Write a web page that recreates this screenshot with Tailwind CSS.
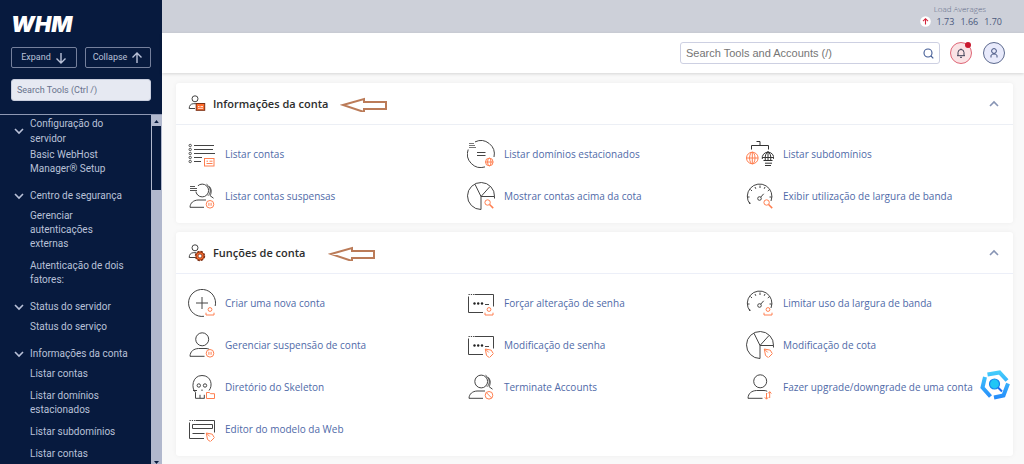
<!DOCTYPE html>
<html lang="pt-BR">
<head>
<meta charset="utf-8">
<title>WHM</title>
<script src="https://cdn.jsdelivr.net/npm/@tailwindcss/browser@4"></script>
</head>
<body class="flex h-screen overflow-hidden bg-[#f9f9f9] font-['Open_Sans',sans-serif]">

<!-- Shared icon shapes -->
<svg class="hidden" aria-hidden="true">
  <defs>
    <g id="b-user" stroke="#ff7f50" fill="none"><circle cx="22" cy="20.5" r="1.9"/><path d="M18 23.7v2.3h8v-2.3"/></g>
    <g id="b-pause" stroke="#ff7f50" fill="none"><circle cx="22" cy="22.3" r="3.8"/><path d="M20.9 20.8v3M23.1 20.8v3"/></g>
    <g id="b-find" stroke="#ff7f50" fill="none"><circle cx="20.6" cy="20.5" r="2.7"/><path d="M22.6 22.5l3.6 3.6" stroke-width="1.5"/></g>
    <g id="b-pen" stroke="#ff7f50" fill="none"><path d="M19.500 24.500l-1.200-6.500 6 1.200 1.700 3M19.500 24.500l2.500 1.800M18.300 18l3.500 3.500M26.500 22.500l-4 4"/></g>
    <g id="user" stroke="#444" fill="none"><circle cx="14.2" cy="8.3" r="6.5"/><path d="M16.5 25.3H2c.2-5 3.600-7.500 8.500-7.800h7.500c1.300 0 2.400.3 3.200.8"/></g>
    <g id="users" stroke="#444" fill="none"><circle cx="14.2" cy="8.500" r="6.400"/><path d="M18.500 2.200c4.800 3.500 4.800 8.800 1.500 11.500M21.500 4.500c2.300 3 2 6.500.6 9.200l3.400 2.500M16 25.300H2c.2-4.500 3.500-7 8-7.300h8"/></g>
    <g id="pie" stroke="#444" fill="none"><path d="M14 27.500A13.500 13.500 0 1 1 27.500 14.500H14zM14 14.500L8 2.300M14 14.500l9-10M27.500 14.500v2"/></g>
    <g id="gauge" stroke="#444" fill="none"><path d="M4 22A12.300 12.300 0 1 1 25 19"/><path d="M1.500 15h2M4.500 7.500l1.500 1.500M14 3.500v2.500M23.500 7.500l-1.700 1.500M26 15h-2.500M9 5l.8 1.800M19 5l-.8 1.800M4 22l-.5-2"/><circle cx="13.500" cy="16.500" r="1.800"/><path d="M14.700 15.200l3-3.400"/></g>
    <g id="pass" stroke="#444" fill="none"><path d="M1.500 7.500v16h14.500M7.500 5.500h19v12"/><path d="M1.500 5.500h5.500" stroke-dasharray="1.300 1"/><path d="M18 15.500h4"/><g fill="#222" stroke="none"><circle cx="7.500" cy="14.500" r="1.200"/><circle cx="11.200" cy="14.500" r="1.200"/><circle cx="15" cy="14.500" r="1.200"/></g></g>
    <g id="globe" fill="none"><circle r="5.800"/><ellipse rx="2.700" ry="5.800"/><path d="M-5.800 0H5.800M0-5.800V5.800"/></g>
    <g id="person-sm" stroke="#444" fill="none"><circle cx="7" cy="3.800" r="3"/><path d="M7 13.500H1.200c0-3 1.500-4.500 4-4.800H8.500"/></g>
  </defs>
</svg>

<aside class="flex w-[162px] shrink-0 flex-col bg-[#071a3e] font-[Roboto,sans-serif] text-[#b9c1d8]">
  <div class="flex flex-col border-b border-[#8e98b3] px-[11px] py-[13px]">
    <div class="h-[22px] font-[Inter,sans-serif] text-[22px] leading-[22px] font-black text-white italic">WHM</div>
    <div class="mt-3 flex gap-2">
      <button type="button" class="flex h-[21px] flex-1 items-center justify-center gap-1 rounded-[2px] border border-[#75809c] text-[9px]">Expand
        <svg class="size-3" viewBox="0 0 12 12" fill="none" stroke="currentColor" stroke-width="1.400"><path d="M6 1v9.500M1.500 6.500L6 11l4.500-4.500"/></svg>
      </button>
      <button type="button" class="flex h-[21px] flex-1 items-center justify-center gap-1 rounded-[2px] border border-[#75809c] text-[9px]">Collapse
        <svg class="size-3" viewBox="0 0 12 12" fill="none" stroke="currentColor" stroke-width="1.400"><path d="M6 11V1.500M1.500 5.500L6 1l4.500 4.500"/></svg>
      </button>
    </div>
    <input type="text" aria-label="Search Tools" placeholder="Search Tools (Ctrl /)" class="mt-[11px] h-[22px] w-full rounded-[3px] border border-[#c9cede] bg-[#e6e9f2] px-[5px] text-[9px] placeholder:text-[#68728c]">
  </div>

  <div class="flex min-h-0 flex-1">
    <nav class="min-w-0 flex-1 overflow-hidden pt-px text-[10px] leading-[14px]">
      <button type="button" class="flex w-full items-center gap-[6px] pl-[14px] text-left leading-[15px]">
        <svg class="h-[10px] w-[10px] shrink-0" viewBox="0 0 10 10" fill="none" stroke="currentColor" stroke-width="1.600"><path d="M1 3l4 4 4-4"/></svg><span>Configuração do<br>servidor</span></button>
      <a href="#" class="block pt-0.5 pb-1 pl-[30px]">Basic WebHost<br>Manager® Setup</a>

      <button type="button" class="flex w-full items-center gap-[6px] pt-2 pb-0.5 pl-[14px] text-left leading-[15px]">
        <svg class="h-[10px] w-[10px] shrink-0" viewBox="0 0 10 10" fill="none" stroke="currentColor" stroke-width="1.600"><path d="M1 3l4 4 4-4"/></svg><span>Centro de segurança</span></button>
      <a href="#" class="block py-1 pl-[30px]">Gerenciar<br>autenticações<br>externas</a>
      <a href="#" class="block py-1 pl-[30px]">Autenticação de dois<br>fatores:</a>

      <button type="button" class="flex w-full items-center gap-[6px] pt-2 pb-0.5 pl-[14px] text-left leading-[15px]">
        <svg class="h-[10px] w-[10px] shrink-0" viewBox="0 0 10 10" fill="none" stroke="currentColor" stroke-width="1.600"><path d="M1 3l4 4 4-4"/></svg><span>Status do servidor</span></button>
      <a href="#" class="block py-1 pl-[30px]">Status do serviço</a>

      <button type="button" class="flex w-full items-center gap-[6px] pt-2 pb-0.5 pl-[14px] text-left leading-[15px]">
        <svg class="h-[10px] w-[10px] shrink-0" viewBox="0 0 10 10" fill="none" stroke="currentColor" stroke-width="1.600"><path d="M1 3l4 4 4-4"/></svg><span>Informações da conta</span></button>
      <a href="#" class="block py-1 pl-[30px]">Listar contas</a>
      <a href="#" class="block py-1 pl-[30px]">Listar domínios<br>estacionados</a>
      <a href="#" class="block py-1 pl-[30px]">Listar subdomínios</a>
      <a href="#" class="block py-1 pl-[30px]">Listar contas</a>
    </nav>
    <!-- Scrollbar -->
    <div class="flex w-[11px] flex-col justify-between overflow-hidden bg-[#b1b8cd] px-px" aria-hidden="true">
      <div>
        <svg class="h-[11px] w-full" viewBox="0 0 9 11"><path d="M2.200 8L4.500 5 6.800 8z" fill="#071a3e"/></svg>
        <div class="h-16 bg-[#071a3e]"></div>
      </div>
      <svg class="h-[3px] w-full" viewBox="0 0 9 3"><path d="M2 0h5L4.500 3z" fill="#071a3e"/></svg>
    </div>
  </div>
</aside>

<div class="flex min-w-0 flex-1 flex-col">
  <div class="flex h-[33px] shrink-0 justify-end bg-[#cdd0d9] pt-[2px] pr-[22px] text-[#4b587c]">
    <div class="flex flex-col items-end">
      <div class="pr-4 text-[8px] leading-[13px] font-light text-[#5d6885]">Load Averages</div>
      <div class="flex items-center gap-[6px] text-[9px] leading-[13px]">
        <svg class="size-[11px]" viewBox="0 0 11 11"><circle cx="5.500" cy="5.500" r="5.300" fill="#fff"/><path d="M5.500 8.500V3M3 5.200l2.500-2.500L8 5.200" fill="none" stroke="#d3243b" stroke-width="1.100"/></svg>
        <span>1.73</span><span>1.66</span><span>1.70</span>
      </div>
    </div>
  </div>

  <header class="flex h-10 shrink-0 items-center justify-end bg-white pr-[19px] shadow-[0_1px_3px_rgba(0,0,0,0.15)]">
    <div class="flex h-[22px] w-[260px] items-center rounded-[3px] border border-[#cdd0e2] bg-white px-[5px]">
      <input type="text" aria-label="Search Tools and Accounts" placeholder="Search Tools and Accounts (/)" class="min-w-0 flex-1 bg-transparent font-['Liberation_Sans',sans-serif] text-[11px] placeholder:text-[#757575]">
      <svg class="size-[11px]" viewBox="0 0 11 11" fill="none" stroke="#425b94" stroke-width="1.100"><circle cx="5" cy="5" r="4"/><path d="M8 8l2.300 2.300"/></svg>
    </div>
    <button type="button" aria-label="Notificações" class="relative ml-[10px] flex size-[22px] items-center justify-center rounded-full border border-[#df6676] bg-[#fae3e5]">
      <svg class="size-[10px]" viewBox="0 0 10 10" fill="none" stroke="#3b3f55"><path d="M1 7.700h8M2 7.700V4.500a3 3 0 0 1 6 0v3.200M4 9.300h2M5 .6v1"/></svg>
      <span class="absolute -top-px right-0 size-[6px] rounded-full bg-[#c9192f]"></span>
    </button>
    <button type="button" aria-label="Conta" class="ml-[11px] flex size-[22px] items-center justify-center rounded-full border border-[#5d6a8e] bg-[#e8eafb]">
      <svg class="size-[10px]" viewBox="0 0 10 10" fill="none" stroke="#40507e"><circle cx="5" cy="3" r="2.400"/><path d="M2 9.500V8c0-1.500 1.200-2 3-2s3 .5 3 2v1.500"/></svg>
    </button>
  </header>

  <main class="flex flex-col gap-[9px] pt-[10px] pr-[11px] pl-[14px]">
    <section class="rounded-[3px] bg-white shadow-[0_0_5px_rgba(0,0,0,0.05)]">
      <div class="flex h-[42px] items-center border-b border-[#eceff5] pr-[14px] pl-3">
        <svg class="size-[18px]" viewBox="0 0 18 18"><use href="#person-sm"/><rect x="8.200" y="8.500" width="8.500" height="6.800" fill="#ff6c2c" stroke="#7a3015"/><path d="M10 11.500h1.500M12.500 11.500h2.500M10 13.300h5" stroke="#fff" stroke-width=".8"/></svg>
        <h2 class="ml-[7px] text-[11px] leading-4 font-semibold text-[#2d2d2d]">Informações da conta</h2>
        <svg class="ml-3 h-4 w-12" viewBox="0 0 48 16" fill="none" stroke="#bb7b58" stroke-width="2"><path d="M3 9L24 3v3h22v7H24v3z"/></svg>
        <button type="button" aria-label="Recolher" class="ml-auto"><svg class="size-[10px]" viewBox="0 0 10 10" fill="none" stroke="#8794b4" stroke-width="1.600"><path d="M1 7l4-4 4 4"/></svg></button>
      </div>
      <div class="grid auto-rows-[42px] grid-cols-3 pt-2 pb-1.5 text-[10px] text-[#4f6aa8]">
        <a href="#" class="flex items-center gap-[9px] pl-3 whitespace-nowrap"><svg class="size-7 shrink-0" viewBox="0 0 28 28" fill="none" stroke="#444"><path d="M6 5.500h20M6 9.500h19M6 13.500h21M6 17.500h8M6 21.500h7"/><g stroke-width=".9"><circle cx="2.200" cy="5.500" r="1.200"/><circle cx="2.200" cy="9.500" r="1.200"/><circle cx="2.200" cy="13.500" r="1.200"/><circle cx="2.200" cy="17.500" r="1.200"/><circle cx="2.200" cy="21.500" r="1.200"/></g><g stroke="#ff7f50"><rect x="16.500" y="18.500" width="9.500" height="7.500"/><path d="M18.500 21.200h1.500M21.500 21.200h3M18.500 23.500h6"/></g></svg>Listar contas</a>
        <a href="#" class="flex items-center gap-[9px] pl-3 whitespace-nowrap"><svg class="size-7 shrink-0" viewBox="0 0 28 28" fill="none" stroke="#444"><path d="M8 1.900A13.500 13.500 0 0 1 27 17M18 26.900A13.500 13.500 0 0 1 1.200 9.500M10 12.500h8.500M10 15.500h8.500"/><path d="M2 3.500h5M2 5.500h6M2 7.500h7" stroke="#777"/><g stroke="#ff7f50"><circle cx="22.300" cy="22" r="3.800"/><ellipse cx="22.300" cy="22" rx="1.700" ry="3.800"/><path d="M18.500 22h7.600"/></g></svg>Listar domínios estacionados</a>
        <a href="#" class="flex items-center gap-[9px] pl-3 whitespace-nowrap"><svg class="size-7 shrink-0" viewBox="0 0 28 28" fill="none" stroke="#333"><path d="M5.500 9.500v-4h17v4M10.500 1.500h3.500v4"/><use href="#globe" x="6.300" y="18" stroke="#ff7f50"/><path d="M16.300 19a5.800 5.800 0 1 1 11.400 0M16.200 17.500h11.600M22 11.500v9M19.300 20c-.5-4 .5-7 2.700-8.300 2.200 1.300 3.200 4.300 2.700 8.300M17.500 20.500h9M19 23.200h7M19 25.500h6"/></svg>Listar subdomínios</a>
        <a href="#" class="flex items-center gap-[9px] pl-3 whitespace-nowrap"><svg class="size-7 shrink-0" viewBox="0 0 28 28"><use href="#users"/><path d="M1.500 3.500h8.500v6h-8.500z" fill="#fff"/><path d="M2 4.500h5M2 6.500h7M2 8.500h7" stroke="#555"/><use href="#b-pause"/></svg>Listar contas suspensas</a>
        <a href="#" class="flex items-center gap-[9px] pl-3 whitespace-nowrap"><svg class="size-7 shrink-0" viewBox="0 0 28 28"><use href="#pie"/><use href="#b-find"/></svg>Mostrar contas acima da cota</a>
        <a href="#" class="flex items-center gap-[9px] pl-3 whitespace-nowrap"><svg class="size-7 shrink-0" viewBox="0 0 28 28"><use href="#gauge"/><use href="#b-find"/></svg>Exibir utilização de largura de banda</a>
      </div>
    </section>

    <section class="rounded-[3px] bg-white shadow-[0_0_5px_rgba(0,0,0,0.05)]">
      <div class="flex h-[42px] items-center border-b border-[#eceff8] pr-[14px] pl-3">
        <svg class="size-[18px]" viewBox="0 0 18 18"><use href="#person-sm"/><circle cx="12" cy="12" r="4.400" fill="#ff6c2c" stroke="#7a3015" stroke-width="1.600" stroke-dasharray="2.300 1.150"/><circle cx="12" cy="12" r="4" fill="#ff6c2c" stroke="#7a3015" stroke-width=".7"/><circle cx="12" cy="12" r="2" fill="#fff" stroke="#7a3015" stroke-width=".8"/></svg>
        <h2 class="ml-[7px] text-[11px] leading-4 font-semibold text-[#2d2d2d]">Funções de conta</h2>
        <svg class="ml-[22px] h-4 w-12" viewBox="0 0 48 16" fill="none" stroke="#bb7b58" stroke-width="2"><path d="M3 9L24 3v3h22v7H24v3z"/></svg>
        <button type="button" aria-label="Recolher" class="ml-auto"><svg class="size-[10px]" viewBox="0 0 10 10" fill="none" stroke="#8794b4" stroke-width="1.600"><path d="M1 7l4-4 4 4"/></svg></button>
      </div>
      <div class="grid auto-rows-[42px] grid-cols-3 pt-2 pb-1.5 text-[10px] text-[#4f6aa8]">
        <a href="#" class="flex items-center gap-[9px] pl-3 whitespace-nowrap"><svg class="size-7 shrink-0" viewBox="0 0 28 28"><path d="M16 27.300A13.500 13.500 0 1 1 27.200 17M14 8v12M8 14h12" fill="none" stroke="#444"/><use href="#b-user"/></svg>Criar uma nova conta</a>
        <a href="#" class="flex items-center gap-[9px] pl-3 whitespace-nowrap"><svg class="size-7 shrink-0" viewBox="0 0 28 28"><use href="#pass"/><use href="#b-user"/></svg>Forçar alteração de senha</a>
        <a href="#" class="flex items-center gap-[9px] pl-3 whitespace-nowrap"><svg class="size-7 shrink-0" viewBox="0 0 28 28"><use href="#gauge"/><use href="#b-user"/></svg>Limitar uso da largura de banda</a>
        <a href="#" class="flex items-center gap-[9px] pl-3 whitespace-nowrap"><svg class="size-7 shrink-0" viewBox="0 0 28 28"><use href="#user"/><use href="#b-pause"/></svg>Gerenciar suspensão de conta</a>
        <a href="#" class="flex items-center gap-[9px] pl-3 whitespace-nowrap"><svg class="size-7 shrink-0" viewBox="0 0 28 28"><use href="#pass"/><use href="#b-pen"/></svg>Modificação de senha</a>
        <a href="#" class="flex items-center gap-[9px] pl-3 whitespace-nowrap"><svg class="size-7 shrink-0" viewBox="0 0 28 28"><use href="#pie"/><use href="#b-pen"/></svg>Modificação de cota</a>
        <a href="#" class="flex items-center gap-[9px] pl-3 whitespace-nowrap"><svg class="size-7 shrink-0" viewBox="0 0 28 28" fill="none" stroke="#444"><path d="M7.500 25.300v-6C3 15.500 4 2.500 14 2.500c9.500 0 11 10.500 7 15M7.500 25.300h9M12 25.300v-3.500M16.300 25.300v-3.500M14 16.500v1.500"/><path d="M5 17.500h4"/><circle cx="10.800" cy="12.500" r="1.700"/><circle cx="17" cy="12.500" r="1.700"/><path d="M18.500 25.500v-6h3l1 1.200h4v4.800z" stroke="#ff7f50"/></svg>Diretório do Skeleton</a>
        <a href="#" class="flex items-center gap-[9px] pl-3 whitespace-nowrap"><svg class="size-7 shrink-0" viewBox="0 0 28 28"><use href="#users"/><g fill="none" stroke="#ff7f50"><circle cx="22" cy="22.300" r="3.800"/><path d="M19.400 19.700l5.200 5.200"/></g></svg>Terminate Accounts</a>
        <a href="#" class="flex items-center gap-[9px] pl-3 whitespace-nowrap"><svg class="size-7 shrink-0" viewBox="0 0 28 28"><use href="#user"/><path d="M20.500 20v6M18.800 24.300l1.700 1.900 1.700-1.900M23.700 25v-6M22 20.500l1.700-1.900 1.700 1.900" fill="none" stroke="#ff7f50"/></svg>Fazer upgrade/downgrade de uma conta</a>
        <a href="#" class="flex items-center gap-[9px] pl-3 whitespace-nowrap"><svg class="size-7 shrink-0" viewBox="0 0 28 28" fill="none" stroke="#444"><path d="M1.500 7.500v16h14.500M7.500 5.500h19v12"/><path d="M1.500 5.500h5.500" stroke-dasharray="1.300 1"/><path d="M4.500 9.500h20v4h-20zM4.500 18.500h12"/><use href="#b-pen"/></svg>Editor do modelo da Web</a>
      </div>
    </section>
  </main>
</div>

<!-- Floating search badge -->
<button type="button" aria-label="Pesquisar" class="fixed right-[14px] bottom-16 size-[30px]">
  <svg class="size-full" viewBox="0 0 30 30" fill="none" stroke-width="4">
    <defs><linearGradient id="blue" x1="0" y1="0" x2="0" y2="30" gradientUnits="userSpaceOnUse"><stop offset="0" stop-color="#46d0fb"/><stop offset="1" stop-color="#2388fb"/></linearGradient></defs>
    <g stroke="url(#blue)"><path d="M7.500 4.500L19.500 2.500l7.500 8"/><path d="M5 7L2.500 17.500l8 9"/><path d="M14 27.500l9.500-2 4.500-12"/></g>
    <circle cx="14.500" cy="14" r="5" fill="#20c6f6" stroke="#1689ee" stroke-width="1.200"/><path d="M18 17.500l4 4" stroke="#1a6df0" stroke-width="2"/>
  </svg>
</button>
</body>
</html>
